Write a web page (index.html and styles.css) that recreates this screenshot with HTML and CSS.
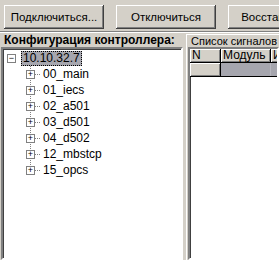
FILE: index.html
```html
<!DOCTYPE html>
<html lang="ru">
<head>
    <meta charset="UTF-8">
    <title>Конфигурация контроллера</title>
    <link rel="stylesheet" href="styles.css">
</head>
<body>
    <!-- Toolbar -->
    <div class="toolbar">
        <button class="btn">Подключиться...</button>
        <button class="btn">Отключиться</button>
        <button class="btn">Восстановить</button>
    </div>

    <div class="main">
        <!-- Controller tree -->
        <div class="left">
            <div class="caption bold">Конфигурация контроллера:</div>
            <div class="tree">
                <div class="row root">
                    <span class="box">−</span>
                    <span class="label selected">10.10.32.7</span>
                </div>
                <div class="children">
                    <div class="row"><span class="twig"><span class="box">+</span></span><span class="label">00_main</span></div>
                    <div class="row"><span class="twig"><span class="box">+</span></span><span class="label">01_iecs</span></div>
                    <div class="row"><span class="twig"><span class="box">+</span></span><span class="label">02_a501</span></div>
                    <div class="row"><span class="twig"><span class="box">+</span></span><span class="label">03_d501</span></div>
                    <div class="row"><span class="twig"><span class="box">+</span></span><span class="label">04_d502</span></div>
                    <div class="row"><span class="twig"><span class="box">+</span></span><span class="label">12_mbstcp</span></div>
                    <div class="row last"><span class="twig"><span class="box">+</span></span><span class="label">15_opcs</span></div>
                </div>
            </div>
        </div>

        <!-- Signal list -->
        <div class="right">
            <div class="caption">Список сигналов</div>
            <div class="grid">
                <div class="grid-row">
                    <div class="cell fixed col-n">N</div>
                    <div class="cell fixed col-mod">Модуль</div>
                    <div class="cell fixed col-name">Имя</div>
                </div>
                <div class="grid-row">
                    <div class="cell fixed col-n"></div>
                    <div class="cell sel col-mod"></div>
                    <div class="cell sel col-name"></div>
                </div>
            </div>
        </div>
    </div>
</body>
</html>
```

FILE: styles.css
```css
:root {
    --face: #d4d0c8;
    --shadow: #808080;
    --dark: #404040;
    --sel: #a6a6ae;
}

* {
    margin: 0;
    padding: 0;
    box-sizing: border-box;
}

body {
    font-family: 'Liberation Sans', Arial, sans-serif;
    font-size: 12px;
    background: var(--face);
    color: #000;
    width: 279px;
    height: 260px;
    overflow: hidden;
}

.bold {
    font-weight: bold;
}

/* Toolbar */
.toolbar {
    display: flex;
    gap: 12px;
    height: 32px;
    padding: 5px 0 0 4px;
    border-bottom: 1px solid var(--shadow);
    box-shadow: 0 1px 0 #fff;
    white-space: nowrap;
    overflow: hidden;
}

.btn {
    flex: 0 0 100px;
    height: 24px;
    background: var(--face);
    border: none;
    font: inherit;
    font-size: 11.5px;
    color: #000;
    box-shadow: inset -1px -1px var(--dark), inset 1px 1px #fff,
                inset -2px -2px var(--shadow), inset 2px 2px var(--face);
}

/* Main area */
.main {
    display: flex;
    height: 227px;
    margin-top: 1px;
}

.caption {
    height: 14px;
    line-height: 14px;
    white-space: nowrap;
}

.left {
    width: 183px;
    display: flex;
    flex-direction: column;
}

.left .caption {
    padding-left: 4px;
}

.tree {
    flex: 1;
    margin-left: 1px;
    background: #fff;
    border: 2px solid;
    border-color: var(--shadow) #fff #fff var(--shadow);
    box-shadow: inset 1px 1px var(--dark);
    padding: 1px 0 0 4px;
}

.row {
    display: flex;
    align-items: center;
    height: 16px;
    white-space: nowrap;
}

.box {
    display: inline-flex;
    align-items: center;
    justify-content: center;
    width: 9px;
    height: 9px;
    border: 1px solid var(--shadow);
    background: #fff;
    font-size: 9px;
    line-height: 1;
    position: relative;
}

.label {
    padding: 0 2px;
    line-height: 15px;
}

.root .label {
    margin-left: 5px;
}

.selected {
    background: var(--sel);
    outline: 1px dotted #000;
    outline-offset: -1px;
}

.children .row {
    padding-left: 19px;
}

.twig {
    position: relative;
    display: flex;
    align-items: center;
    width: 15px;
    height: 16px;
}

.twig::before {
    content: "";
    position: absolute;
    left: 4px;
    top: 0;
    width: 1px;
    height: 16px;
    background: repeating-linear-gradient(to bottom, var(--shadow) 0 1px, transparent 1px 2px);
}

.last .twig::before {
    height: 8px;
}

.twig::after {
    content: "";
    position: absolute;
    left: 9px;
    top: 8px;
    width: 6px;
    height: 1px;
    background: repeating-linear-gradient(to right, var(--shadow) 0 1px, transparent 1px 2px);
}

/* Signal grid */
.right {
    flex: 1;
    margin-left: 3px;
    margin-top: 1px;
    border-top: 1px solid #fff;
    border-left: 1px solid #fff;
    display: flex;
    flex-direction: column;
    min-width: 0;
}

.right .caption {
    height: 12px;
    line-height: 12px;
    padding-left: 4px;
    font-size: 11px;
    overflow: hidden;
}

.grid {
    flex: 1;
    margin-left: 1px;
    background: #fff;
    border: 2px solid;
    border-color: var(--shadow) #fff #fff var(--shadow);
    box-shadow: inset 1px 1px var(--dark);
    overflow: hidden;
}

.grid-row {
    display: flex;
    height: 14px;
    border-bottom: 1px solid #000;
    width: max-content;
}

.cell {
    height: 13px;
    line-height: 13px;
    padding-left: 2px;
    border-right: 1px solid #000;
    white-space: nowrap;
}

.fixed {
    background: var(--face);
    box-shadow: inset 1px 1px #fff, inset -1px -1px var(--shadow);
}

.sel {
    background: var(--sel);
    border-right-color: #b8b8c0;
}

.col-n {
    width: 31px;
}

.col-mod {
    width: 50px;
}

.col-name {
    width: 64px;
}
```
